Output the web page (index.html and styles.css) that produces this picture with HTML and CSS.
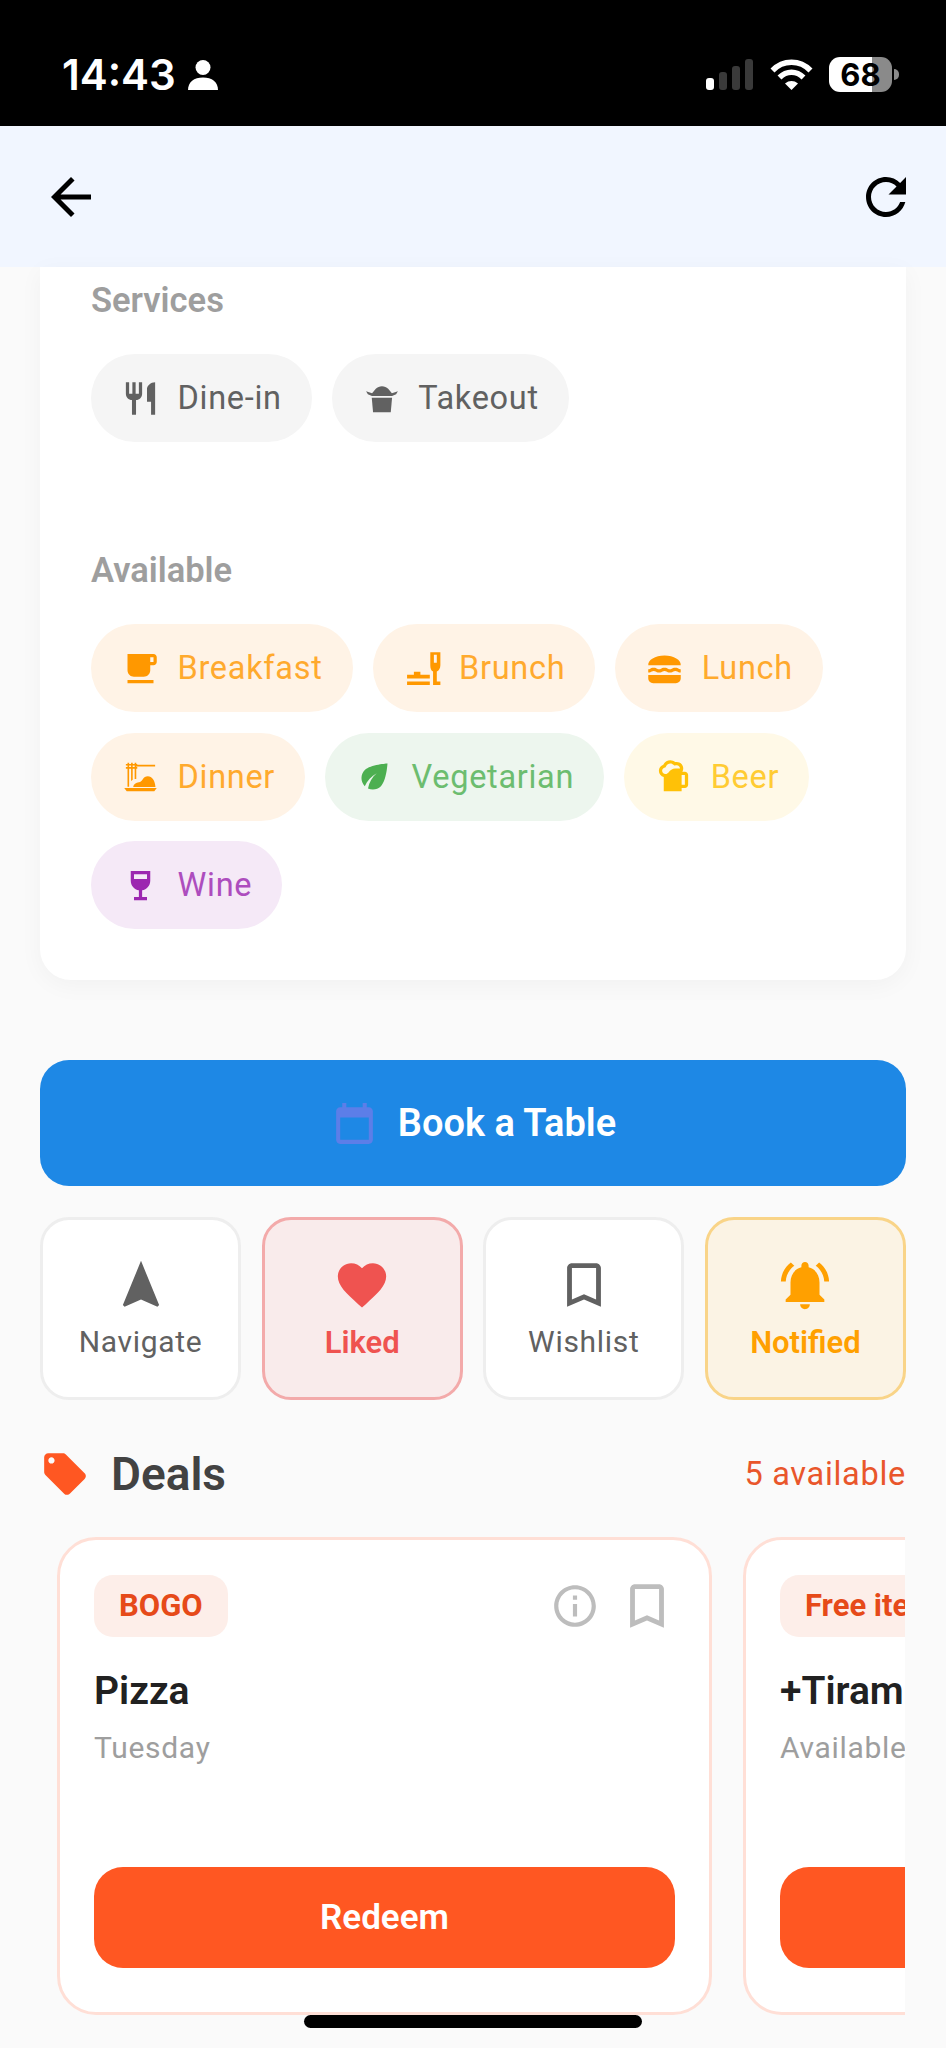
FILE: index.html
```html
<!DOCTYPE html>
<html lang="en">
  <head>
    <meta charset="utf-8" />
    <meta name="viewport" content="width=device-width, initial-scale=1" />
    <title>Restaurant</title>
    <link rel="stylesheet" href="styles.css">
  </head>
  <body>
    <div class="status-bar">
      <div class="status-left">
        <span class="time">14:43</span>
        <svg class="person" viewBox="0 0 30 30"><circle cx="15" cy="7.5" r="7.5"/><path d="M0 30c0-8 6-12.500 15-12.500S30 22 30 30z"/></svg>
      </div>
      <div class="status-right">
        <div class="signal">
          <span class="bar bar-1"></span>
          <span class="bar bar-2"></span>
          <span class="bar bar-3"></span>
          <span class="bar bar-4"></span>
        </div>
        <svg class="wifi" viewBox="0 0 43 31"><path class="wifi-arc" d="M2.500 11.500C13 .5 30 .5 40.500 11.500M9.500 18.500C16.500 11.500 26.500 11.500 33.500 18.500"/><path d="M15 24.500c4-3.300 9-3.300 13 0L21.500 31z"/></svg>
        <div class="battery">68</div>
        <span class="battery-nub"></span>
      </div>
    </div>

    <div class="app-bar">
      <svg class="app-icon" viewBox="0 0 24 24"><path d="M20 11H7.830l5.590-5.590L12 4l-8 8 8 8 1.410-1.410L7.830 13H20v-2z"/></svg>
      <svg class="app-icon" viewBox="0 0 24 24"><path d="M17.650 6.350C16.200 4.900 14.210 4 12 4c-4.420 0-7.990 3.580-7.990 8s3.570 8 7.990 8c3.730 0 6.840-2.550 7.730-6h-2.080c-.82 2.330-3.040 4-5.650 4-3.310 0-6-2.690-6-6s2.690-6 6-6c1.660 0 3.140.69 4.220 1.780L13 11h7V4l-2.350 2.350z"/></svg>
    </div>

    <div class="info-card">
      <div class="group">
        <div class="group-label">Services</div>
        <div class="chips">
          <div class="chip chip-grey">
            <svg viewBox="0 0 24 24"><path d="M11 9H9V2H7v7H5V2H3v7c0 2.120 1.660 3.840 3.750 3.970V22h2.500v-9.030C11.340 12.840 13 11.120 13 9V2h-2v7zm5-3v8h2.500v8H21V2c-2.760 0-5 2.240-5 4z"/></svg>
            <span>Dine-in</span>
          </div>
          <div class="chip chip-grey">
            <svg viewBox="0 0 24 24"><path d="M6 11.500h12.500l-.8 9H6.800z"/><path d="M2.500 7.500l3.700 1.300L8.500 6c1-1 2.300-1.600 3.800-1.600S15.100 5 16.100 6l2.300 2.800 3.700-1.300-1.100 1.900-2.500 1.100H6.100L3.600 9.400z"/></svg>
            <span>Takeout</span>
          </div>
        </div>
      </div>
      <div class="group group-next">
        <div class="group-label">Available</div>
        <div class="chips">
          <div class="chip chip-orange">
            <svg viewBox="0 0 24 24"><path d="M20 3H4v10c0 2.210 1.790 4 4 4h6c2.210 0 4-1.790 4-4v-3h2c1.110 0 2-.89 2-2V5c0-1.110-.89-2-2-2zm0 5h-2V5h2v3zM4 19h16v2H4z"/></svg>
            <span>Breakfast</span>
          </div>
          <div class="chip chip-orange">
            <svg viewBox="0 0 24 24"><path d="M2.500 20h14v2.200h-14zM2.500 15.800h4.200v-1.800h4v1.800h5.800v2.400h-14z"/><path fill-rule="evenodd" d="M16.800 2h6.200v8c0 1.900-1 3.400-2.200 3.900V20h2.200v2.200h-4.500V13.900C17.300 13.400 16.800 11.900 16.800 10zM19 3.500v5h1.800v-5z"/></svg>
            <span>Brunch</span>
          </div>
          <div class="chip chip-orange">
            <svg viewBox="0 0 24 24"><path d="M22 10c.32-3.280-4.280-6-9.990-6C6.300 4 1.700 6.720 2.020 10H22zM5.350 13.500c.55 0 .78.14 1.150.36.45.27 1.070.64 2.180.64s1.730-.37 2.180-.64c.37-.23.59-.36 1.150-.36.55 0 .78.14 1.150.36.45.27 1.070.64 2.180.64 1.110 0 1.730-.37 2.180-.64.37-.23.59-.36 1.150-.36.55 0 .78.14 1.150.36.45.27 1.070.63 2.160.64v-1.980s-.79-.16-1.160-.38c-.45-.27-1.070-.64-2.180-.64s-1.730.37-2.180.64c-.37.23-.6.36-1.150.36s-.78-.14-1.150-.36c-.45-.27-1.070-.64-2.180-.64s-1.730.37-2.180.64c-.37.23-.59.36-1.150.36-.55 0-.78-.14-1.150-.36-.45-.27-1.070-.64-2.180-.64s-1.730.37-2.180.64c-.37.23-.59.36-1.150.36v1.980c1.110 0 1.730-.37 2.210-.64.37-.23.6-.36 1.140-.36zM2 16v2c0 1.660 1.340 3 3 3h14c1.660 0 3-1.340 3-3v-2H2z"/></svg>
            <span>Lunch</span>
          </div>
          <div class="chip chip-orange">
            <svg viewBox="0 0 24 24"><path d="M2 19h20l-1.500 2H3.500z"/><path d="M4 3.500h1v14.800H4zM6.200 3.500h1v10.500l-1 .7zM3 4.300h7v1H3zM3 6.200h7v1H3zM8.400 3.500h1v10h-1zM9.400 4.800H21v1H9.400z"/><path d="M7.500 18.400c.2-1.700 1.700-2.700 3.500-2.900 1.100-.1 1.700-.8 2.300-1.700.8-1.200 1.900-1.900 3.200-1.900 2.600 0 4.500 2.800 4.700 6.500z"/></svg>
            <span>Dinner</span>
          </div>
          <div class="chip chip-green">
            <svg viewBox="0 0 24 24"><path d="M6.050 8.050c-2.730 2.730-2.730 7.150-.02 9.880 1.470-3.400 4.090-6.240 7.360-7.930-2.770 2.340-4.710 5.610-5.390 9.320 2.600 1.230 5.800.78 7.950-1.370C19.430 14.470 20 4 20 4S9.530 4.570 6.050 8.050z"/></svg>
            <span>Vegetarian</span>
          </div>
          <div class="chip chip-yellow">
            <svg viewBox="0 0 24 24"><path d="M19 9h-1.560c.35-.59.56-1.270.56-2 0-2.210-1.790-4-4-4-.34 0-.66.05-.98.13C12.200 2.450 11.160 2 10 2c-1.890 0-3.510 1.110-4.270 2.710C4.150 5.260 3 6.740 3 8.500c0 1.860 1.280 3.410 3 3.860V21h11v-2h2c1.100 0 2-.9 2-2v-6c0-1.100-.9-2-2-2zM7 10.500c-1.100 0-2-.9-2-2 0-.85.55-1.600 1.370-1.880l.8-.27.36-.76C8 4.620 8.940 4 10 4c.79 0 1.390.35 1.740.65l.78.65S13.160 5 13.990 5c1.100 0 2 .9 2 2h-3C9.670 7 9.150 10.500 7 10.500zM19 17h-2v-6h2v6z"/></svg>
            <span>Beer</span>
          </div>
          <div class="chip chip-purple">
            <svg viewBox="0 0 24 24"><path d="M6 3v6c0 2.970 2.160 5.430 5 5.910V19H8v2h8v-2h-3v-4.090c2.840-.48 5-2.940 5-5.910V3H6zm10 5H8V5h8v3z"/></svg>
            <span>Wine</span>
          </div>
        </div>
      </div>
    </div>

    <button class="book-btn">
      <svg viewBox="0 0 24 24"><path d="M19 4h-1V2h-2v2H8V2H6v2H5C3.890 4 3 4.900 3 6v14c0 1.100.89 2 2 2h14c1.100 0 2-.9 2-2V6c0-1.100-.9-2-2-2zm0 16H5V9h14v11z"/></svg>
      <span>Book a Table</span>
    </button>

    <div class="actions">
      <div class="action">
        <svg viewBox="0 0 24 24"><path d="M12 2L4.500 20.290l.71.71L12 18l6.790 3 .71-.71z"/></svg>
        <span>Navigate</span>
      </div>
      <div class="action action-liked">
        <svg viewBox="0 0 24 24"><path d="M12 21.350l-1.450-1.320C5.400 15.360 2 12.280 2 8.500 2 5.420 4.420 3 7.500 3c1.740 0 3.410.81 4.500 2.090C13.090 3.810 14.760 3 16.500 3 19.580 3 22 5.420 22 8.500c0 3.780-3.400 6.860-8.550 11.540L12 21.350z"/></svg>
        <span>Liked</span>
      </div>
      <div class="action">
        <svg viewBox="0 0 24 24"><path d="M17 3H7c-1.100 0-1.990.9-1.990 2L5 21l7-3 7 3V5c0-1.100-.9-2-2-2zm0 15l-5-2.180L7 18V5h10v13z"/></svg>
        <span>Wishlist</span>
      </div>
      <div class="action action-notified">
        <svg viewBox="0 0 24 24"><path d="M7.580 4.080L6.150 2.650C3.750 4.480 2.170 7.300 2.030 10.500h2c.15-2.650 1.510-4.970 3.550-6.420zm12.390 6.420h2c-.15-3.200-1.730-6.020-4.120-7.850l-1.420 1.430c2.020 1.450 3.390 3.770 3.540 6.420zM18 11c0-3.070-1.640-5.640-4.500-6.320V4c0-.83-.67-1.500-1.500-1.500s-1.500.67-1.500 1.500v.68C7.630 5.360 6 7.920 6 11v5l-2 2v1h16v-1l-2-2v-5zm-6 11c.14 0 .27-.01.4-.04.65-.14 1.180-.58 1.440-1.180.1-.24.15-.5.15-.78h-4c.01 1.100.9 2 2.010 2z"/></svg>
        <span>Notified</span>
      </div>
    </div>

    <div class="deals-head">
      <div class="deals-title">
        <svg viewBox="0 0 24 24"><path d="M21.410 11.580l-9-9C12.050 2.220 11.550 2 11 2H4c-1.100 0-2 .9-2 2v7c0 .55.22 1.050.59 1.420l9 9c.36.36.86.58 1.410.58.55 0 1.050-.22 1.410-.59l7-7c.37-.36.59-.86.59-1.410 0-.55-.23-1.060-.59-1.420zM5.500 7C4.670 7 4 6.330 4 5.500S4.670 4 5.500 4 7 4.670 7 5.500 6.330 7 5.500 7z"/></svg>
        <span>Deals</span>
      </div>
      <span class="deals-count">5 available</span>
    </div>

    <div class="deals-list">
      <div class="deal">
        <div class="deal-top">
          <span class="deal-badge">BOGO</span>
          <div class="deal-icons">
            <svg class="deal-info" viewBox="0 0 24 24"><path d="M11 7h2v2h-2zm0 4h2v6h-2zm1-9C6.480 2 2 6.480 2 12s4.480 10 10 10 10-4.480 10-10S17.520 2 12 2zm0 18c-4.410 0-8-3.590-8-8s3.590-8 8-8 8 3.590 8 8-3.590 8-8 8z"/></svg>
            <svg class="deal-save" viewBox="0 0 24 24"><path d="M17 3H7c-1.100 0-1.990.9-1.990 2L5 21l7-3 7 3V5c0-1.100-.9-2-2-2zm0 15l-5-2.180L7 18V5h10v13z"/></svg>
          </div>
        </div>
        <div class="deal-name">Pizza</div>
        <div class="deal-when">Tuesday</div>
        <button class="redeem">Redeem</button>
      </div>
      <div class="deal">
        <div class="deal-top">
          <span class="deal-badge">Free item</span>
        </div>
        <div class="deal-name">+Tiramisu</div>
        <div class="deal-when">Available daily</div>
        <button class="redeem">Redeem</button>
      </div>
    </div>

    <!-- sits over the bottom of the deal cards -->
    <div class="home-bar"></div>
  </body>
</html>
```

FILE: styles.css
```css
* {
  box-sizing: border-box;
}

html,
body {
  margin: 0;
  height: 2048px;
  overflow: hidden;
}

body {
  position: relative;
  background-color: #fafafa;
  font-family: Roboto, "Liberation Sans", sans-serif;
}

svg {
  fill: currentColor;
  flex-shrink: 0;
}

/* status bar */
.status-bar {
  height: 126px;
  background-color: #000;
  color: #fff;
  display: flex;
  justify-content: space-between;
  align-items: flex-start;
  padding: 57px 47px 0 62px;
}

.status-left {
  display: flex;
  align-items: center;
  gap: 12px;
}

.time {
  font-family: Inter, Roboto, sans-serif;
  font-size: 42px;
  font-weight: 600;
  line-height: 36px;
}

.person {
  width: 30px;
  height: 30px;
}

.status-right {
  display: flex;
  align-items: center;
}

.signal {
  display: flex;
  align-items: flex-end;
  gap: 5px;
  height: 31px;
}

.bar {
  width: 8px;
  border-radius: 3px;
  background-color: #3a3a3a;
}

.bar-1 {
  height: 12px;
  background-color: #fff;
}

.bar-2 {
  height: 18px;
}

.bar-3 {
  height: 24px;
}

.bar-4 {
  height: 31px;
}

.wifi {
  width: 43px;
  height: 31px;
  margin-left: 17px;
}

.wifi-arc {
  fill: none;
  stroke: #fff;
  stroke-width: 5.500;
}

.battery {
  width: 63px;
  height: 35px;
  margin-left: 16px;
  border-radius: 11px;
  background: linear-gradient(to right, #fff 43px, #8a8a8a 43px);
  color: #000;
  font-family: Inter, Roboto, sans-serif;
  font-size: 31px;
  font-weight: 700;
  line-height: 35px;
  text-align: center;
}

.battery-nub {
  width: 5px;
  height: 11px;
  margin-left: 2px;
  border-radius: 0 5px 5px 0;
  background-color: #8a8a8a;
}

/* app bar */
.app-bar {
  height: 141px;
  background-color: #f1f6ff;
  color: #000;
  display: flex;
  justify-content: space-between;
  align-items: center;
  padding: 0 30px 0 41px;
}

.app-icon {
  width: 60px;
  height: 60px;
}

/* card with the chips */
.info-card {
  margin: 0 40px;
  height: 713px;
  padding: 15px 51px 0;
  background-color: #fff;
  border-radius: 0 0 31px 31px;
  box-shadow: 0 5px 24px rgba(0, 0, 0, 0.04);
}

.group-next {
  margin-top: 110px;
}

.group-label {
  font-size: 34.500px;
  font-weight: 600;
  line-height: 37px;
  color: #9e9e9e;
  margin-bottom: 35px;
}

.chips {
  display: flex;
  flex-wrap: wrap;
  gap: 20.500px 20px;
}

.chip {
  height: 88px;
  padding: 0 30px;
  border-radius: 44px;
  display: flex;
  align-items: center;
  gap: 17.500px;
  font-size: 32.500px;
  letter-spacing: 0.7px;
}

.chip svg {
  width: 39px;
  height: 39px;
}

.chip-grey {
  background-color: #f5f5f5;
  color: #616161;
}

.chip-orange {
  background-color: #fff3e6;
  color: #ff9800;
}

.chip-green {
  background-color: #edf6ee;
  color: #4caf50;
}

.chip-yellow {
  background-color: #fff9e7;
  color: #ffc107;
}

.chip-purple {
  background-color: #f5e9f7;
  color: #9c27b0;
}

.chip-orange span,
.chip-green span,
.chip-yellow span,
.chip-purple span {
  opacity: 0.8;
}

/* book button */
.book-btn {
  display: flex;
  justify-content: center;
  align-items: center;
  gap: 19px;
  width: 866px;
  height: 126px;
  margin: 80px 0 0 40px;
  border: none;
  border-radius: 29px;
  background-color: #1e88e5;
  color: #fff;
  font-family: inherit;
  font-size: 38px;
  font-weight: 600;
}

.book-btn svg {
  width: 49px;
  height: 49px;
  color: #5c7ee8;
}

/* action tiles */
.actions {
  display: grid;
  grid-template-columns: repeat(4, 1fr);
  gap: 20.500px;
  margin: 31px 40px 0;
}

.action {
  height: 183px;
  padding-top: 36px;
  border: 3px solid #eeeeee;
  border-radius: 29px;
  background-color: #fff;
  color: #616161;
  display: flex;
  flex-direction: column;
  align-items: center;
  font-size: 30px;
  letter-spacing: 0.7px;
}

.action svg {
  width: 58px;
  height: 58px;
  margin-bottom: 10px;
}

.action-liked {
  background-color: #f9ebeb;
  border-color: #f3aaaa;
  color: #ef5350;
  font-size: 31px;
  font-weight: 600;
  letter-spacing: 0;
}

.action-notified {
  background-color: #fbf3e4;
  border-color: #f9d488;
  color: #ffa000;
  font-size: 31px;
  font-weight: 600;
  letter-spacing: 0;
}

/* deals */
.deals-head {
  height: 60px;
  margin: 44px 40px 0;
  display: flex;
  justify-content: space-between;
  align-items: center;
}

.deals-title {
  display: flex;
  align-items: center;
  gap: 21px;
  font-size: 46px;
  font-weight: 600;
  color: #424242;
}

.deals-title svg {
  width: 50px;
  height: 50px;
  color: #ff5722;
}

.deals-count {
  font-size: 32.500px;
  letter-spacing: 0.7px;
  color: #e9562b;
}

.deals-list {
  display: flex;
  gap: 31px;
  height: 490px;
  margin: 33px 41px 0 40px;
  padding-left: 17px;
  overflow: hidden;
}

.deal {
  flex: 0 0 655px;
  height: 478px;
  padding: 35px 34px 44px 34px;
  border: 3px solid #ffdfd6;
  border-radius: 39px;
  background-color: #fff;
  display: flex;
  flex-direction: column;
}

.deal-top {
  display: flex;
  justify-content: space-between;
  align-items: center;
  height: 62px;
}

.deal-badge {
  height: 62px;
  padding: 0 25px;
  border-radius: 19px;
  background-color: #fdeee9;
  color: #e64a19;
  font-size: 31px;
  font-weight: 700;
  line-height: 62px;
  white-space: nowrap;
}

.deal-icons {
  display: flex;
  align-items: center;
  gap: 18px;
  margin-right: -1px;
  color: #bdbdbd;
}

.deal-info {
  width: 50px;
  height: 50px;
}

.deal-save {
  width: 58px;
  height: 58px;
}

.deal-name {
  margin-top: 30px;
  font-size: 39px;
  font-weight: 600;
  line-height: 48px;
  color: #212121;
  white-space: nowrap;
}

.deal-when {
  margin-top: 15px;
  font-size: 30px;
  letter-spacing: 0.7px;
  line-height: 36px;
  color: #9e9e9e;
  white-space: nowrap;
}

.redeem {
  margin-top: auto;
  flex-shrink: 0;
  width: 100%;
  height: 101px;
  border: none;
  border-radius: 29px;
  background-color: #ff5722;
  color: #fff;
  font-family: inherit;
  font-size: 35px;
  font-weight: 600;
}

.home-bar {
  position: absolute;
  left: 304px;
  top: 2015px;
  width: 338px;
  height: 13px;
  border-radius: 7px;
  background-color: #000;
}
```
